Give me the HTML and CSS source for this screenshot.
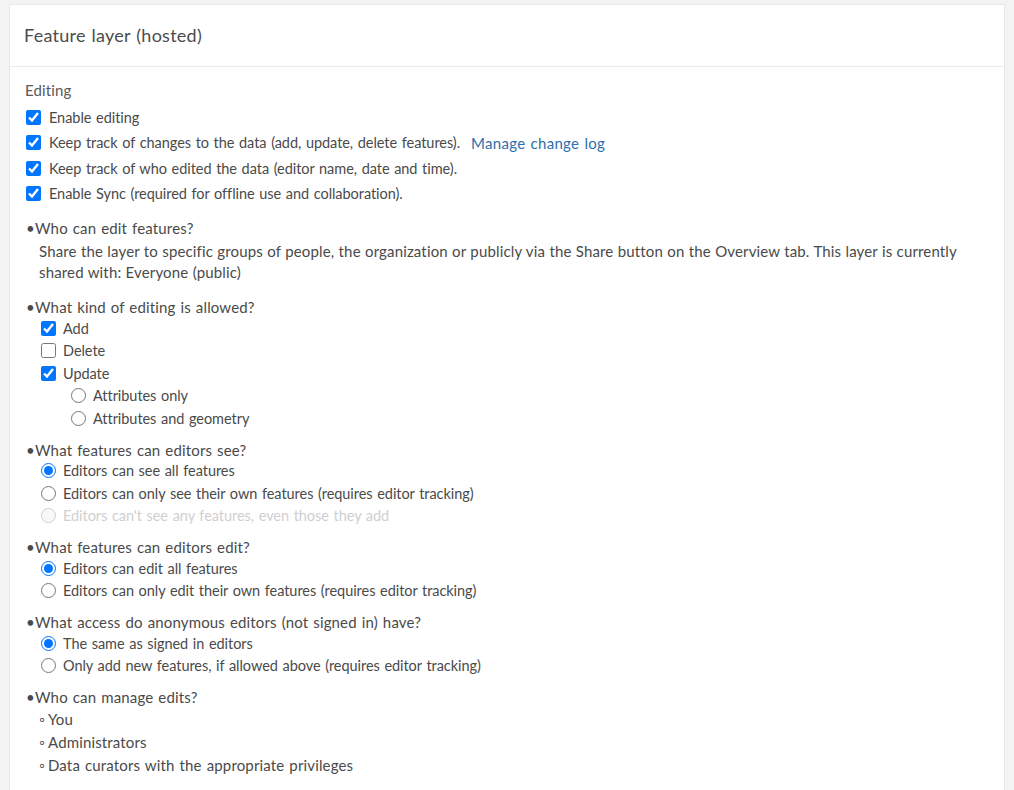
FILE: index.html
```html
<!DOCTYPE html>
<html lang="en">
<head>
<meta charset="utf-8">
<title>Feature layer (hosted)</title>
<link rel="stylesheet" href="styles.css">
</head>
<body>
<div class="panel">
  <div class="panel-header">Feature layer (hosted)</div>
  <div class="panel-body">
    <div class="section-title">Editing</div>
    <ul class="checks">
      <li><label><input type="checkbox" checked><span>Enable editing</span></label></li>
      <li><label><input type="checkbox" checked><span>Keep track of changes to the data (add, update, delete features).</span></label><a class="link" href="#">Manage change log</a></li>
      <li><label><input type="checkbox" checked><span>Keep track of who edited the data (editor name, date and time).</span></label></li>
      <li><label><input type="checkbox" checked><span>Enable Sync (required for offline use and collaboration).</span></label></li>
    </ul>
    <ul class="questions">
      <li class="question">
        <div class="q">Who can edit features?</div>
        <p class="q-desc">Share the layer to specific groups of people, the organization or publicly via the Share button on the Overview tab. This layer is currently shared with: Everyone (public)</p>
      </li>
      <li class="question">
        <div class="q">What kind of editing is allowed?</div>
        <ul class="options">
          <li><label><input type="checkbox" checked><span>Add</span></label></li>
          <li><label><input type="checkbox"><span>Delete</span></label></li>
          <li><label><input type="checkbox" checked><span>Update</span></label></li>
          <li class="nested"><label><input type="radio" name="upd"><span>Attributes only</span></label></li>
          <li class="nested"><label><input type="radio" name="upd"><span>Attributes and geometry</span></label></li>
        </ul>
      </li>
      <li class="question">
        <div class="q">What features can editors see?</div>
        <ul class="options">
          <li><label><input type="radio" name="see" checked><span>Editors can see all features</span></label></li>
          <li><label><input type="radio" name="see"><span>Editors can only see their own features (requires editor tracking)</span></label></li>
          <li class="disabled"><label><input type="radio" name="see" disabled><span>Editors can't see any features, even those they add</span></label></li>
        </ul>
      </li>
      <li class="question">
        <div class="q">What features can editors edit?</div>
        <ul class="options">
          <li><label><input type="radio" name="edit" checked><span>Editors can edit all features</span></label></li>
          <li><label><input type="radio" name="edit"><span>Editors can only edit their own features (requires editor tracking)</span></label></li>
        </ul>
      </li>
      <li class="question">
        <div class="q">What access do anonymous editors (not signed in) have?</div>
        <ul class="options">
          <li><label><input type="radio" name="anon" checked><span>The same as signed in editors</span></label></li>
          <li><label><input type="radio" name="anon"><span>Only add new features, if allowed above (requires editor tracking)</span></label></li>
        </ul>
      </li>
      <li class="question">
        <div class="q">Who can manage edits?</div>
        <ul class="subbullets">
          <li>You</li>
          <li>Administrators</li>
          <li>Data curators with the appropriate privileges</li>
        </ul>
      </li>
    </ul>
  </div>
</div>
</body>
</html>
```
FILE: styles.css
```css
html, body {
  margin: 0;
  padding: 0;
  background: #f3f3f3;
}
body {
  font-family: Lato, "Open Sans", sans-serif;
  font-size: 14.5px;
  letter-spacing: -0.05px;
  word-spacing: 1px;
  color: #4a4a4a;
}
.panel {
  margin: 4px 9px 0 9px;
  background: #ffffff;
  border: 1px solid #e8e8e8;
  border-bottom: none;
  min-height: 800px;
}
.panel-header {
  height: 61px;
  line-height: 61px;
  padding-left: 14px;
  font-size: 18px;
  letter-spacing: 0.25px;
  color: #4c4c4c;
  border-bottom: 1px solid #ebebeb;
}
.panel-body {
  padding: 13px 15px 20px 15px;
}
.section-title {
  line-height: 21px;
  font-size: 15px;
  letter-spacing: 0.15px;
  color: #595959;
}
ul {
  list-style: none;
  margin: 0;
  padding: 0;
}
label {
  display: flex;
  align-items: center;
}
input[type="checkbox"],
input[type="radio"] {
  width: 15px;
  height: 15px;
  margin: 0 7px 0 0;
  flex: none;
}
.checks {
  margin-top: 4px;
}
.checks li {
  height: 25.33px;
  display: flex;
  align-items: center;
  padding-left: 1px;
}
.checks input {
  margin-right: 8px;
}
.link {
  color: #2f6fad;
  text-decoration: none;
  font-size: 15px;
  letter-spacing: 0.3px;
  margin-left: 11px;
}
.question {
  margin-top: 11px;
}
.checks + .questions .question:first-child {
  margin-top: 12.33px;
}
.q {
  line-height: 19px;
  font-size: 15px;
  letter-spacing: 0.15px;
}
.q::before {
  content: "•";
  display: inline-block;
  width: 10px;
  padding-left: 1px;
  box-sizing: border-box;
}
.q-desc {
  margin: 0;
  padding: 3px 0 4.5px 14px;
  line-height: 21px;
  font-size: 15px;
  letter-spacing: 0.15px;
  word-spacing: 0.3px;
}
.options li {
  height: 22.5px;
  display: flex;
  align-items: center;
  padding-left: 16px;
}
.options li.nested {
  padding-left: 46px;
}
.options li.disabled {
  color: #cfcfcf;
}
.subbullets {
  margin-top: 1px;
}
.subbullets li {
  line-height: 23px;
  font-size: 15px;
  letter-spacing: 0.15px;
  padding-left: 14px;
}
.subbullets li::before {
  content: "◦";
  display: inline-block;
  width: 9px;
}
```
